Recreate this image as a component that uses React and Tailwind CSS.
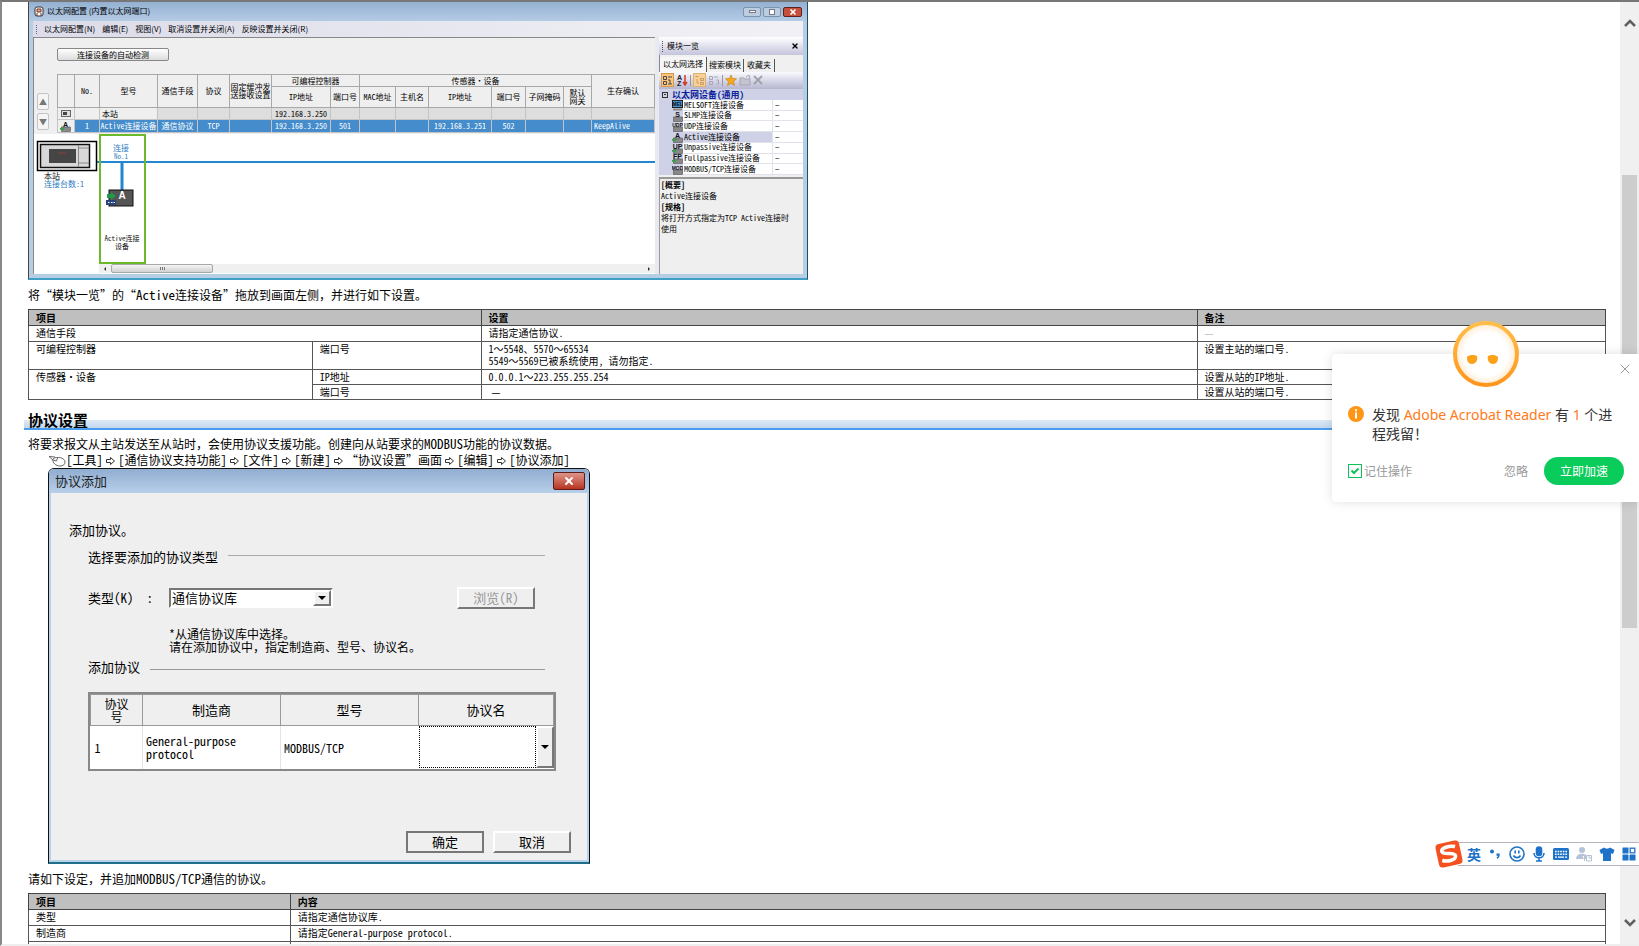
import React, { useState } from 'react';
import { X } from 'lucide-react';

const tree = [
  { name: 'MELSOFT连接设备', tag: 'MEL' },
  { name: 'SLMP连接设备', tag: 'S' },
  { name: 'UDP连接设备', tag: 'UDP' },
  { name: 'Active连接设备', tag: 'A', active: true },
  { name: 'Unpassive连接设备', tag: 'UP' },
  { name: 'Fullpassive连接设备', tag: 'FP' },
  { name: 'MODBUS/TCP连接设备', tag: 'MOD' },
];

const menus = ['以太网配置(N)', '编辑(E)', '视图(V)', '取消设置并关闭(A)', '反映设置并关闭(R)'];

// Half-width Latin inside body text
const L = ({ children }) => <span className="text-[13px] leading-none">{children}</span>;

const Arrow = () => (
  <svg viewBox="0 0 15 12" className="inline-block w-[15px] h-3 align-[-2px]" fill="none" stroke="#333">
    <path d="M3.500 4.500h4v-2l4 3.500-4 3.500v-2h-4z" />
  </svg>
);

const MouseIcon = () => (
  <svg viewBox="0 0 18 12" className="inline-block w-[18px] h-3 align-[-2px]" fill="none" stroke="#555" strokeWidth="0.9">
    <path d="M1 1.500l4 3.500M1 1.500l6 .5" />
    <path d="M5 4.500C4 7.500 8 11 12 11c3 0 5-1.500 5-4S14 2.500 10.500 2.500C8 2.500 5.500 2.500 5 4.500z" />
    <path d="M5 5l3.500 1 1-3" />
  </svg>
);

const DeviceIcon = ({ tag }) => (
  <svg viewBox="0 0 11 11" className="w-[11px] h-[11px] shrink-0">
    {tag === 'MEL' ? (
      <>
        <rect x="0.500" y="0.500" width="10" height="7" fill="#4a90d0" stroke="#222" />
        <rect x="1" y="8.500" width="9" height="2" fill="#888" />
      </>
    ) : (
      <>
        <rect x="1.500" y="6" width="9" height="4.500" fill="#888" stroke="#555" strokeWidth="0.6" />
        {['A', 'UP', 'FP'].includes(tag) && <path d="M0 7h2v-1.500l2.500 2.300L2 10V8.800H0z" fill="#3a9d4c" />}
      </>
    )}
    <text
      x="5.500"
      y="5.700"
      textAnchor="middle"
      fontSize={tag.length > 2 ? 5 : 7}
      fontWeight="bold"
      fontFamily="Liberation Sans"
      fill="#111"
    >
      {tag}
    </text>
  </svg>
);

const TreeToolbar = () => (
  <svg viewBox="0 0 142 17" className="w-[142px] h-[17px]" fill="none">
    <rect x="2.500" y="1.500" width="12" height="13" fill="#fcc676" stroke="#d79a44" />
    <path d="M4.500 4.500h3v3h-3zM4.500 9.500h3v3h-3zM9 5h4M9 8h2v4M9 12h4" stroke="#445" />
    <text x="18" y="8" fontSize="7" fontWeight="bold" fontFamily="Liberation Sans" fill="#222">A</text>
    <text x="18" y="14" fontSize="7" fontWeight="bold" fontFamily="Liberation Sans" fill="#222">Z</text>
    <path d="M26 3v9M24 10l2 3 2-3" stroke="#d43a2a" strokeWidth="1.500" />
    <path d="M31.500 3v11" stroke="#999" />
    <rect x="34.500" y="1.500" width="12" height="13" fill="#f8cf97" stroke="#e0b070" />
    <path d="M36.500 4.500h3M38 7v4h2M41.500 6.500h3v2h-3zM41.500 10.500h3v2h-3z" stroke="#c49a68" />
    <path d="M50.500 4.500h3v3h-3zM50.500 9.500h3v3h-3zM55 5h4M57.500 8h2v4h-2" stroke="#a6a6b8" />
    <path d="M63.500 3v11" stroke="#999" />
    <path d="M72 3l1.500 3.500 4 .3-3 2.600 1 4L72 11.200l-3.500 2.200 1-4-3-2.600 4-.3z" fill="#fba81c" stroke="#c9821a" strokeWidth="0.7" />
    <path d="M81 6h4l1 1h5v6H81z" fill="#c4c4d0" stroke="#a6a6b4" />
    <path d="M87 5l3-2 1 4" stroke="#a6a6b4" />
    <path d="M95 4l8 8M103 4l-8 8" stroke="#a0a0ac" strokeWidth="1.800" />
  </svg>
);

const EthernetTable = () => {
  const th = 'border border-[#a8a8a8] p-0 font-normal text-center align-middle';
  const td = 'border border-[#c4c4c4] p-0 text-center whitespace-nowrap';
  return (
    <table className="w-[597px] table-fixed border-collapse text-[8px] leading-[8px] bg-[#efefef]">
      <colgroup>
        <col className="w-[17px]" /><col className="w-[25px]" /><col className="w-[58px]" />
        <col className="w-[40px]" /><col className="w-[32px]" /><col className="w-[42px]" />
        <col className="w-[59px]" /><col className="w-[29px]" /><col className="w-[36px]" />
        <col className="w-[33px]" /><col className="w-[63px]" /><col className="w-[34px]" />
        <col className="w-[38px]" /><col className="w-[28px]" /><col className="w-[63px]" />
      </colgroup>
      <thead>
        <tr className="h-3">
          <th rowSpan={2} className={th}></th>
          <th rowSpan={2} className={th}>No.</th>
          <th rowSpan={2} className={th}>型号</th>
          <th rowSpan={2} className={th}>通信手段</th>
          <th rowSpan={2} className={th}>协议</th>
          <th rowSpan={2} className={th}>固定缓冲发送接收设置</th>
          <th colSpan={2} className={th}>可编程控制器</th>
          <th colSpan={6} className={th}>传感器・设备</th>
          <th rowSpan={2} className={th}>生存确认</th>
        </tr>
        <tr className="h-[21px]">
          <th className={th}>IP地址</th>
          <th className={th}>端口号</th>
          <th className={th}>MAC地址</th>
          <th className={th}>主机名</th>
          <th className={th}>IP地址</th>
          <th className={th}>端口号</th>
          <th className={th}>子网掩码</th>
          <th className={th}>默认<br />网关</th>
        </tr>
      </thead>
      <tbody>
        <tr className="h-3 bg-[#dedede]">
          <td className={`${td} bg-[#efefef]`}>
            <svg viewBox="0 0 10 7" className="mx-auto w-[10px] h-[7px]">
              <rect x="0.500" y="0.500" width="9" height="6" fill="#ddd" stroke="#666" />
              <rect x="2" y="2" width="4" height="3" fill="#444" />
            </svg>
          </td>
          <td className={`${td} bg-[#efefef]`}></td>
          <td className={`${td} bg-[#efefef] pl-0.5 text-left`}>本站</td>
          <td className={td}></td><td className={td}></td><td className={td}></td>
          <td className={td}>192.168.3.250</td>
          <td className={td}></td><td className={td}></td><td className={td}></td><td className={td}></td>
          <td className={td}></td><td className={td}></td><td className={td}></td><td className={td}></td>
        </tr>
        <tr className="h-[13px] bg-[#448ccb] text-white">
          <td className={`${td} bg-[#efefef]`}><div className="flex justify-center"><DeviceIcon tag="A" /></div></td>
          <td className={td}>1</td>
          <td className={td}>Active连接设备</td>
          <td className={td}>通信协议</td>
          <td className={td}>TCP</td>
          <td className={td}></td>
          <td className={td}>192.168.3.250</td>
          <td className={td}>501</td>
          <td className={td}></td>
          <td className={td}></td>
          <td className={td}>192.168.3.251</td>
          <td className={td}>502</td>
          <td className={td}></td>
          <td className={td}></td>
          <td className={`${td} pl-0.5 text-left`}>KeepAlive</td>
        </tr>
      </tbody>
    </table>
  );
};

const Diagram = () => (
  <svg viewBox="0 0 621 130" className="block w-[621px] h-[130px] mt-px shrink-0" fontSize="8">
    <rect width="621" height="130" fill="#fff" />
    <path d="M63 28h558" stroke="#2286d2" strokeWidth="2" />
    <rect x="66" y="1" width="45" height="128" fill="none" stroke="#6cb92c" strokeWidth="2" />
    <path d="M88 28v28" stroke="#2286d2" strokeWidth="3" />
    <rect x="3.500" y="7.500" width="59" height="29" fill="#fff" stroke="#000" strokeWidth="1.500" />
    <rect x="6.500" y="10.500" width="49" height="23" fill="#d8d8d8" stroke="#111" strokeWidth="1.500" />
    <path d="M44.500 11v22M44 14h11M44 29h11" stroke="#777" strokeWidth="0.8" />
    <rect x="15" y="15" width="27" height="14" fill="#454545" />
    <path d="M24 19h8" stroke="#a04040" strokeWidth="0.700" />
    <text x="87" y="17" textAnchor="middle" fill="#2f80c4">连接</text>
    <text x="87" y="25" textAnchor="middle" fontSize="7" fill="#2f80c4">No.1</text>
    <text x="10" y="45" fill="#111">本站</text>
    <text x="10" y="53" fill="#2f80c4">连接台数:1</text>
    <rect x="75" y="56" width="24" height="16" fill="#555" stroke="#111" />
    <text x="88" y="65" textAnchor="middle" fontSize="10" fontWeight="bold" fontFamily="Liberation Sans" fill="#fff">A</text>
    <path d="M73 60h4v-2l5 4-5 4v-2h-4z" fill="#1e9a48" />
    <rect x="72" y="66" width="10" height="5" fill="#27457c" />
    <path d="M74 68.500h1.500M77 68.500h1.500M79.500 68.500h1.500" stroke="#fff" />
    <text x="88" y="107" textAnchor="middle" fontSize="7" fill="#111">Active连接</text>
    <text x="88" y="115" textAnchor="middle" fontSize="7" fill="#111">设备</text>
  </svg>
);

const EthernetWindow = () => (
  <section className="flex flex-col w-[780px] h-[278px] border-l border-r border-b-2 border-l-[#444] border-r-[#1d4f66] border-b-[#3f9fc4] bg-[#b6cde6]">
    <header className="flex items-center h-[19px] pl-[5px] pr-[5px] bg-linear-to-b from-[#94b1d1] to-[#b4cbe5] text-[8px] font-['Noto_Sans_CJK_SC',sans-serif]">
      <svg viewBox="0 0 10 11" className="w-[10px] h-[11px] mr-[3px]">
        <rect x="1" y="1" width="8" height="9" rx="2" fill="#fff" stroke="#333" />
        <path d="M3 3h4v3H3zM3 7v3M7 7v3" stroke="#7a3326" fill="#e6a37c" />
      </svg>
      <h2 className="grow">以太网配置 (内置以太网端口)</h2>
      <div className="flex gap-[2px]">
        <button aria-label="最小化" className="flex items-center justify-center w-[18px] h-[10px] border border-[#7d93ac] rounded-xs bg-[#bccddf]">
          <span className="w-[7px] h-[3px] border border-[#778] bg-white"></span>
        </button>
        <button aria-label="最大化" className="flex items-center justify-center w-[18px] h-[10px] border border-[#7d93ac] rounded-xs bg-[#bccddf]">
          <span className="w-[6px] h-[6px] border border-[#778] bg-white"></span>
        </button>
        <button aria-label="关闭" className="flex items-center justify-center w-[19px] h-[10px] border border-[#5c2320] rounded-xs bg-[#c5503c] text-white">
          <X className="w-2 h-2" strokeWidth={5} />
        </button>
      </div>
    </header>
    <nav className="flex items-center gap-[7px] h-4 mx-1 pl-[3px] bg-linear-to-r from-[#dcdcea] to-[#f1f1f5] text-[8px] font-['Noto_Sans_CJK_SC',sans-serif]">
      <span className="h-[9px] border-l border-dotted border-[#667]"></span>
      {menus.map((m) => (
        <button key={m} className="whitespace-nowrap">{m}</button>
      ))}
    </nav>
    <div className="flex grow min-h-0 mx-1 mb-1 bg-[#e9e9f2]">
      <div className="flex flex-col w-[622px] border-t border-l border-[#888] bg-[#efefef]">
        <button className="ml-[23px] mt-[10px] w-28 h-[13px] border border-[#888] rounded-xs bg-linear-to-b from-white to-[#dcdcdc] text-[8px] leading-[10px]">
          连接设备的自动检测
        </button>
        <div className="flex mt-[13px]">
          <div className="flex flex-col items-start w-[23px] pl-[3px] pt-[19px] gap-[3px]">
            <button aria-label="上移" className="w-3 h-[17px] border border-[#c4c4c4] rounded-xs bg-[#f5f5f5] text-[#777] text-[8px] leading-[14px]">▲</button>
            <button aria-label="下移" className="w-3 h-[17px] border border-[#c4c4c4] rounded-xs bg-[#f5f5f5] text-[#777] text-[8px] leading-[14px]">▼</button>
          </div>
          <EthernetTable />
        </div>
        <Diagram />
        <div className="flex grow bg-white pl-[65px]">
          <div className="flex items-center grow h-[9px] pl-1 pr-1 bg-[#f0f0f0]">
            <svg viewBox="0 0 4 6" className="w-1 h-[6px]"><path d="M3 1L1 3l2 2z" fill="#333" /></svg>
            <div className="flex items-center justify-center w-[102px] h-[9px] ml-1 border border-[#a8a8a8] rounded-xs bg-linear-to-b from-[#f4f4f4] to-[#d2d2d2]">
              <span className="flex w-[5px] h-[3px] border-x border-[#777]"><span className="mx-auto w-px bg-[#777]"></span></span>
            </div>
            <svg viewBox="0 0 4 6" className="w-1 h-[6px] ml-auto"><path d="M1 1l2 2-2 2z" fill="#333" /></svg>
          </div>
        </div>
      </div>
      <aside className="flex flex-col grow ml-1 text-[8px] bg-[#f0f0f0]">
        <div className="flex items-center h-[18px] pl-[3px] pr-1 bg-linear-to-b from-white to-[#c4c4dc]">
          <span className="h-[11px] border-l border-dotted border-[#556] mr-1"></span>
          <span className="grow">模块一览</span>
          <button aria-label="关闭面板"><X className="w-2 h-2" strokeWidth={4} /></button>
        </div>
        <div className="flex items-end h-[17px] border-l border-[#888]">
          <button className="px-[3px] h-[15px] bg-[#f6f6f6] border-r border-[#555]">以太网选择</button>
          <button className="px-[2px] h-[13px] border-r border-[#555]">搜索模块</button>
          <button className="px-[3px] h-[13px] border-r border-[#555]">收藏夹</button>
        </div>
        <div className="h-[17px] bg-linear-to-b from-[#fafaff] to-[#b6b6d0]"><TreeToolbar /></div>
        <div className="flex items-center h-[11px] pl-[3px] bg-[#cfd2e6] font-bold text-[#0c1f9c] text-[9px]">
          <span className="flex items-center justify-center w-[6px] h-[6px] mr-1 border border-[#333]">
            <span className="w-[2px] h-px bg-[#333]"></span>
          </span>
          以太网设备(通用)
        </div>
        <ul className="flex flex-col h-[75px] pl-[13px] bg-[#cfd2e6]">
          {tree.map((d) => (
            <li key={d.name} className="flex grow basis-0 min-h-0 items-center">
              <DeviceIcon tag={d.tag} />
              <span className={`flex items-center w-[89px] h-full pl-px border-b border-[#e2e2ea] whitespace-nowrap ${d.active ? 'bg-[#cfd2e6]' : 'bg-white'}`}>
                {d.name}
              </span>
              <span className="flex items-center grow h-full pl-[2px] border-l border-b border-[#e2e2ea] bg-white">−</span>
            </li>
          ))}
        </ul>
        <div className="grow mt-[2px] pl-px border-t-2 border-l border-[#999] bg-[#efefef] leading-[11px]">
          <p className="font-bold">[概要]</p>
          <p>Active连接设备</p>
          <p className="font-bold">[规格]</p>
          <p>将打开方式指定为TCP Active连接时<br />使用</p>
        </div>
      </aside>
    </div>
  </section>
);

const docTh = 'border border-[#444] bg-[#bfbfbf] px-[7px] py-0 text-left font-bold leading-[15px]';
const docTd = 'border border-[#555] px-[7px] py-px align-top leading-3';

const SettingsTable = () => (
  <table className="w-full table-fixed border-collapse text-[10px]">
    <colgroup>
      <col className="w-[18%]" /><col className="w-[10.7%]" />
      <col className="w-[45.4%]" /><col className="w-[25.9%]" />
    </colgroup>
    <thead>
      <tr>
        <th colSpan={2} className={docTh}>项目</th>
        <th className={docTh}>设置</th>
        <th className={docTh}>备注</th>
      </tr>
    </thead>
    <tbody>
      <tr className="h-4">
        <td colSpan={2} className={docTd}>通信手段</td>
        <td className={docTd}>请指定通信协议.</td>
        <td className={`${docTd} text-[#bbb]`}>—</td>
      </tr>
      <tr className="h-7">
        <td className={docTd}>可编程控制器</td>
        <td className={docTd}>端口号</td>
        <td className={docTd}>1～5548、5570～65534<br />5549～5569已被系统使用, 请勿指定.</td>
        <td className={docTd}>设置主站的端口号.</td>
      </tr>
      <tr>
        <td rowSpan={2} className={docTd}>传感器・设备</td>
        <td className={docTd}>IP地址</td>
        <td className={docTd}>0.0.0.1～223.255.255.254</td>
        <td className={docTd}>设置从站的IP地址.</td>
      </tr>
      <tr>
        <td className={docTd}>端口号</td>
        <td className={`${docTd} pl-[10px]`}>—</td>
        <td className={docTd}>设置从站的端口号.</td>
      </tr>
    </tbody>
  </table>
);

const ContentTable = () => (
  <table className="w-full table-fixed border-collapse text-[10px]">
    <colgroup>
      <col className="w-[16.6%]" /><col />
    </colgroup>
    <thead>
      <tr>
        <th className={docTh}>项目</th>
        <th className={docTh}>内容</th>
      </tr>
    </thead>
    <tbody>
      <tr className="h-4">
        <td className={docTd}>类型</td>
        <td className={docTd}>请指定通信协议库.</td>
      </tr>
      <tr className="h-4">
        <td className={docTd}>制造商</td>
        <td className={docTd}>请指定General-purpose protocol.</td>
      </tr>
      <tr className="h-4">
        <td className={docTd}></td>
        <td className={docTd}></td>
      </tr>
    </tbody>
  </table>
);

const ProtocolDialog = () => {
  const raised = 'border-2 border-t-white border-l-white border-r-[#777] border-b-[#777] bg-[#efefef]';
  const th = 'border border-[#999] p-0 font-normal bg-[#efefef]';
  return (
    <section className="flex flex-col ml-5 w-[542px] h-[396px] border border-b-2 border-[#111] border-b-[#1f6f88] rounded-t-md bg-[#efefef] text-[13px]">
      <header className="flex items-center justify-between h-6 pl-[6px] pr-1 rounded-t-sm bg-linear-to-b from-[#91add0] to-[#b7cfe9]">
        <h2 className="text-[#222]">协议添加</h2>
        <button aria-label="关闭" className="flex items-center justify-center w-8 h-[18px] border border-[#5a1d18] rounded-xs bg-linear-to-b from-[#dd9388] to-[#b83220] text-white">
          <X className="w-3 h-3" strokeWidth={4} />
        </button>
      </header>
      <div className="flex flex-col grow border-x-2 border-b-2 border-[#b9d2ec] pl-[18px] pr-4">
        <p className="mt-[27px] leading-5">添加协议。</p>
        <div className="flex items-center gap-[10px] mt-[7px] pl-[19px] pr-[26px] leading-5">
          <span>选择要添加的协议类型</span>
          <span className="grow -mt-1 border-t border-[#aaa]"></span>
        </div>
        <div className="flex items-center mt-[20px] pl-[19px] pr-[36px]">
          <label htmlFor="protocol-type" className="w-[81px]">类型(K)　:</label>
          <div className="relative w-[164px]">
            <select id="protocol-type" className="w-full h-5 pl-px border-2 border-t-[#777] border-l-[#777] border-r-white border-b-white bg-white appearance-none leading-4">
              <option>通信协议库</option>
            </select>
            <span className={`absolute top-[2px] right-[2px] flex items-center justify-center w-[18px] h-4 pointer-events-none ${raised}`}>
              <svg viewBox="0 0 8 4" className="w-2 h-1 shrink-0"><path d="M0 0h8L4 4z" /></svg>
            </span>
          </div>
          <button disabled className={`ml-auto w-[78px] h-[22px] text-[#999] leading-4 ${raised}`}>浏览(R)</button>
        </div>
        <p className="mt-[18px] pl-[100px] text-xs leading-[13px]">
          *从通信协议库中选择。<br />请在添加协议中，指定制造商、型号、协议名。
        </p>
        <div className="flex items-center gap-[10px] mt-1 pl-[19px] pr-[26px] leading-5">
          <span>添加协议</span>
          <span className="grow mt-1 border-t border-[#999]"></span>
        </div>
        <div className="ml-[19px] mt-[15px] w-[468px] border-2 border-[#888]">
          <table className="w-full table-fixed border-collapse bg-white">
            <colgroup>
              <col className="w-[52px]" /><col className="w-[138px]" /><col className="w-[138px]" /><col />
            </colgroup>
            <thead>
              <tr className="h-[31px]">
                <th className={`${th} text-xs leading-[13px]`}>协议<br />号</th>
                <th className={th}>制造商</th>
                <th className={th}>型号</th>
                <th className={th}>协议名</th>
              </tr>
            </thead>
            <tbody className="text-xs leading-[13px]">
              <tr className="h-[43px]">
                <td className="pl-1 py-0 border-r border-[#e4e4e4]">1</td>
                <td className="pl-[3px] py-0 border-r border-[#e4e4e4]">General-purpose<br />protocol</td>
                <td className="pl-[3px] py-0">MODBUS/TCP</td>
                <td className="p-0">
                  <div className="flex h-[42px]">
                    <input aria-label="协议名" className="grow min-w-0 border border-dotted border-black" />
                    <button aria-label="展开" className={`flex items-center justify-center w-[18px] ${raised}`}>
                      <svg viewBox="0 0 8 4" className="w-2 h-1 shrink-0"><path d="M0 0h8L4 4z" /></svg>
                    </button>
                  </div>
                </td>
              </tr>
            </tbody>
          </table>
        </div>
        <div className="flex justify-end gap-[9px] mt-auto mb-[7px]">
          <button className="w-[78px] h-[22px] border-2 border-[#777] bg-[#efefef] leading-4">确定</button>
          <button className={`w-[78px] h-[22px] leading-4 ${raised}`}>取消</button>
        </div>
      </div>
    </section>
  );
};

const CleanupPopup = ({ onClose }) => {
  const [remember, setRemember] = useState(true);
  return (
    <div className="absolute right-0 top-[352px] w-[307px] h-[148px] rounded-l-sm bg-white shadow-[0_0_12px_rgba(0,0,0,0.12)] text-[#333]">
      <svg viewBox="0 0 68 68" className="absolute left-[120px] -top-[34px] w-[68px] h-[68px]">
        <defs>
          <linearGradient id="ring" x1="0" y1="0" x2="0" y2="1">
            <stop offset="0" stopColor="#ffbe4a" />
            <stop offset="1" stopColor="#ff951c" />
          </linearGradient>
          <radialGradient id="face">
            <stop offset="0.700" stopColor="#fff" />
            <stop offset="1" stopColor="#ffe9cc" />
          </radialGradient>
        </defs>
        <circle cx="34" cy="34" r="31" fill="url(#face)" stroke="url(#ring)" strokeWidth="4" />
        <path d="M15 37c3-3 8-2 10-1 1 4-1 8-5 8s-5-3-5-7zM46 37c-3-3-8-2-10-1-1 4 1 8 5 8s5-3 5-7z" fill="#fba11c" />
      </svg>
      <button onClick={onClose} aria-label="关闭提示" className="absolute right-[6px] top-[7px] text-[#999]">
        <X className="w-4 h-4" strokeWidth={1.5} />
      </button>
      <div className="flex gap-2 pt-[51px] pl-4">
        <svg viewBox="0 0 16 16" className="w-4 h-4 mt-px shrink-0">
          <circle cx="8" cy="8" r="8" fill="#ff9516" />
          <path d="M8 3.200v2M8 6.500v6" stroke="#fff" strokeWidth="2" />
        </svg>
        <p className="text-sm leading-[19px] font-['Noto_Sans','Noto_Sans_CJK_SC',sans-serif]">
          发现 <span className="text-[#ff7a1a]">Adobe Acrobat Reader</span> 有 <span className="text-[#ff7a1a]">1</span> 个进<br />程残留！
        </p>
      </div>
      <div className="flex items-center mt-[14px] pl-4 pr-[15px] text-xs text-[#999]">
        <label className="relative flex items-center gap-[2px]">
          <input
            type="checkbox"
            checked={remember}
            onChange={(e) => setRemember(e.target.checked)}
            className="w-[14px] h-[14px] border border-[#0fc25a] bg-white appearance-none"
          />
          {remember && (
            <svg viewBox="0 0 14 14" className="absolute left-0 w-[14px] h-[14px] pointer-events-none" fill="none">
              <path d="M3.500 6.500L6 9l4.500-4.500" stroke="#0fc25a" strokeWidth="2" />
            </svg>
          )}
          记住操作
        </label>
        <button onClick={onClose} className="ml-auto mr-4">忽略</button>
        <button className="w-20 h-7 rounded-full bg-[#0acc5b] text-white">立即加速</button>
      </div>
    </div>
  );
};

const ImeBar = () => (
  <div className="absolute right-0 top-[836px] flex items-center h-8">
    <svg viewBox="0 0 30 30" className="relative w-[30px] h-[30px] -mr-[6px]">
      <g transform="rotate(-12 15 15)">
        <rect x="3" y="3" width="24" height="24" rx="4" fill="#f4511e" />
        <path d="M22.500 9C17 6.500 8.500 7.500 8.500 11c0 4.500 12.500 2.500 12.500 7 0 4.500-9 4.500-14 2" stroke="#fff" strokeWidth="3.600" fill="none" />
      </g>
    </svg>
    <div className="flex items-center gap-[7px] h-6 pl-[9px] pr-[3px] border-y border-[#b4b4bf] bg-white text-[#1e73c8]">
      <span className="text-sm font-bold">英</span>
      <svg viewBox="0 0 14 14" className="w-[14px] h-[14px]" fill="currentColor">
        <circle cx="4" cy="4.500" r="2" />
        <path d="M8.500 6.500h3.200c.3 3-.8 4.700-2.700 5.300l-.4-1.200c.8-.4 1.200-1 1.200-1.800H8.500z" />
      </svg>
      <svg viewBox="0 0 16 16" className="w-4 h-4" fill="none" stroke="currentColor" strokeWidth="1.600">
        <circle cx="8" cy="8" r="7" />
        <path d="M6.200 4.500v3M9.800 4.500v3M4.500 9.500c1.500 2.800 5.500 2.800 7 0" />
      </svg>
      <svg viewBox="0 0 14 16" className="w-[14px] h-4" fill="none" stroke="currentColor" strokeWidth="1.600">
        <rect x="4.500" y="1" width="5" height="8.500" rx="2.500" fill="currentColor" />
        <path d="M2 7c0 6.500 10 6.500 10 0M7 12v3M4 15h6" />
      </svg>
      <svg viewBox="0 0 16 14" className="w-4 h-[14px]">
        <rect x="0" y="1" width="16" height="12" rx="1.500" fill="currentColor" />
        <path d="M2 4.500h12M2 7.200h12" stroke="#fff" strokeWidth="1.600" strokeDasharray="1.600 1" />
        <path d="M2 10.200h2M5 10.200h6M12 10.200h2" stroke="#fff" strokeWidth="1.300" />
      </svg>
      <svg viewBox="0 0 16 16" className="w-4 h-4">
        <circle cx="6" cy="4" r="3" fill="#b6c3d6" />
        <path d="M0 13c0-7 12-7 12 0z" fill="#b6c3d6" />
        <path d="M6.500 9.500h2V15M10.500 15V9.500h5V15zM13 9.500V12h2.500" stroke="#b6c3d6" fill="#fff" />
      </svg>
      <svg viewBox="0 0 16 16" className="w-4 h-4" fill="currentColor">
        <path d="M5 1.500c1 1.500 5 1.500 6 0L15.500 4 14 8l-2-.7V15H4V7.300L2 8 .5 4z" />
      </svg>
      <svg viewBox="0 0 14 14" className="w-[14px] h-[14px]" fill="currentColor">
        <rect x="0.500" y="0.500" width="6" height="6" rx="0.500" />
        <rect x="8.200" y="1.200" width="4.600" height="4.600" fill="none" stroke="currentColor" strokeWidth="1.300" />
        <rect x="0.500" y="7.500" width="6" height="6" rx="0.500" />
        <rect x="7.500" y="7.500" width="6" height="6" rx="0.500" />
      </svg>
    </div>
  </div>
);

const App = () => {
  const [popupOpen, setPopupOpen] = useState(true);

  return (
    <div lang="zh-CN" className="relative flex h-screen overflow-hidden border-t-2 border-l-2 border-b-2 border-t-[#777] border-l-[#888] border-b-[#eee] bg-white text-black font-['Noto_Sans_Mono_CJK_SC','Noto_Sans_CJK_SC',sans-serif]">
      <main className="grow min-w-0 overflow-hidden pl-[26px] pr-[14px] text-xs">
        <EthernetWindow />
        <p className="h-[29px] leading-[29px]">将“模块一览”的“<L>Active</L>连接设备”拖放到画面左侧，并进行如下设置。</p>
        <SettingsTable />
        <h1 className="-ml-1 -mr-[14px] mt-[9px] pl-1 h-[21px] border-b-2 border-[#4a9df0] bg-linear-to-b from-white from-60% via-[#dde9f5] via-60% to-[#c3d8ee] text-[15px] leading-[21px] font-bold">
          协议设置
        </h1>
        <p className="mt-[6px] h-4 leading-4">将要求报文从主站发送至从站时，会使用协议支援功能。创建向从站要求的<L>MODBUS</L>功能的协议数据。</p>
        <p className="pl-5 h-4 leading-4 whitespace-nowrap">
          <MouseIcon /><L>[</L>工具<L>]</L><Arrow /><L>[</L>通信协议支持功能<L>]</L><Arrow /><L>[</L>文件<L>]</L><Arrow /><L>[</L>新建<L>]</L><Arrow />“协议设置”画面<Arrow /><L>[</L>编辑<L>]</L><Arrow /><L>[</L>协议添加<L>]</L>
        </p>
        <ProtocolDialog />
        <p className="h-[29px] leading-[30px]">请如下设定，并追加<L>MODBUS/TCP</L>通信的协议。</p>
        <ContentTable />
      </main>
      <div className="flex flex-col items-center w-[19px] shrink-0 pt-4 pb-4 bg-[#f0f0f0]">
        <svg viewBox="0 0 12 10" className="w-3 h-[10px]" fill="none"><path d="M1 8l5-5 5 5" stroke="#606060" strokeWidth="2.500" /></svg>
        <div className="w-[15px] h-[453px] mt-[147px] bg-[#cdcdcd]"></div>
        <svg viewBox="0 0 12 10" className="w-3 h-[10px] mt-auto" fill="none"><path d="M1 2l5 5 5-5" stroke="#606060" strokeWidth="2.500" /></svg>
      </div>
      {popupOpen && <CleanupPopup onClose={() => setPopupOpen(false)} />}
      <ImeBar />
    </div>
  );
};

export default App;
